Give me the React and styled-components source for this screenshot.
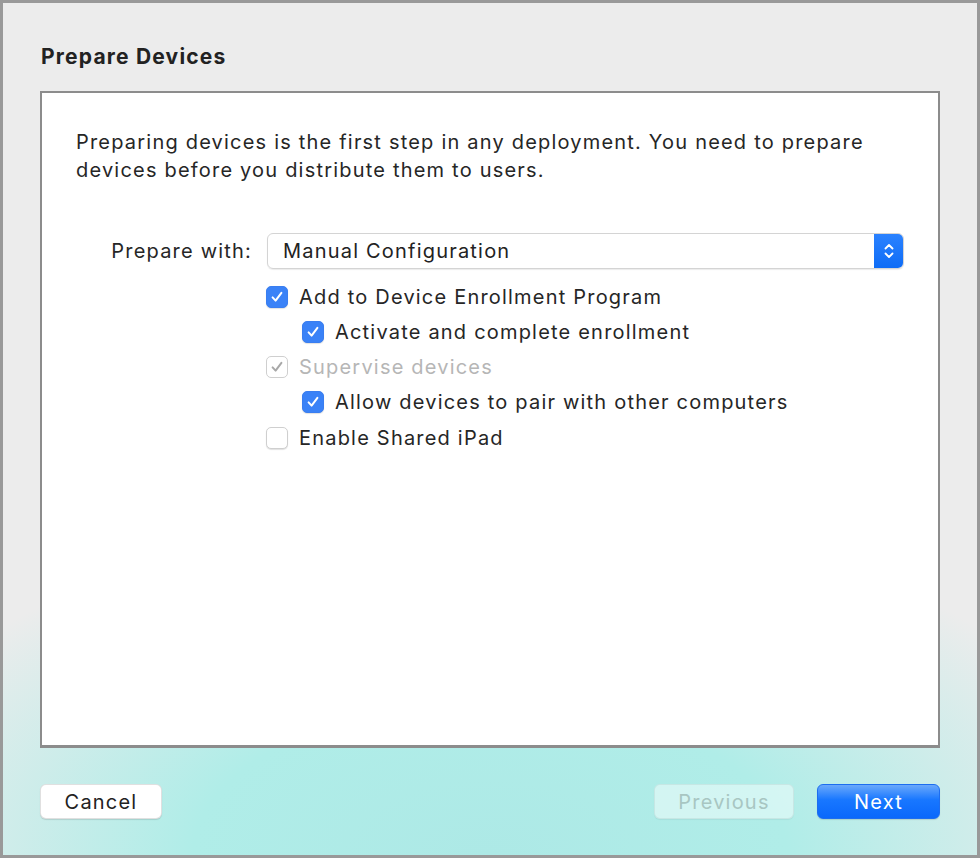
import React from 'react'
import styled, { createGlobalStyle } from 'styled-components'

const Global = createGlobalStyle`
  html, body { margin:0; padding:0; }
  body { font-family: Inter, "Noto Sans", "Liberation Sans", sans-serif; }
`

const Window = styled.div`
  width:980px;
  height:858px;
  box-sizing:border-box;
  border:3px solid #999;
  background:
    radial-gradient(ellipse 660px 340px at 50% 100%, #ade9e6 0%, #b0ede8 45%, rgba(176,237,232,0) 100%),
    #ececec;
  display:flex;
  flex-direction:column;
  padding:0 37px 36px 37px;
`
const Title = styled.h1`
  margin:0;
  height:88px;
  box-sizing:border-box;
  padding-top:41px;
  padding-left:1px;
  font-size:21px;
  font-weight:700;
  color:#222;
  letter-spacing:1.2px;
`
const Panel = styled.div`
  flex:1;
  background:#fff;
  border:2px solid #8c8c8c;
  border-bottom-width:3px;
  padding:35px 34px 0 34px;
`
const Intro = styled.p`
  margin:0;
  font-size:20px;
  line-height:28px;
  color:#262626;
  letter-spacing:1.2px;
`
const Form = styled.div`
  margin-top:49px;
  display:grid;
  grid-template-columns:176px 1fr;
  column-gap:15px;
  align-items:center;
  letter-spacing:1.2px;
`
const Label = styled.div`
  font-size:20px;
  color:#262626;
  text-align:right;
`
const Select = styled.div`
  height:36px;
  box-sizing:border-box;
  border:1px solid #d4d4d4;
  border-radius:6px;
  box-shadow:0 1px 1px rgba(0,0,0,0.08);
  display:flex;
  align-items:center;
  overflow:hidden;
  font-size:20px;
  color:#222;
`
const SelectText = styled.div`
  flex:1;
  padding-left:15px;
`
const Stepper = styled.div`
  width:29px;
  height:100%;
  background:linear-gradient(#2b82ff, #0e6cf6);
  display:flex;
  align-items:center;
  justify-content:center;
`
const Options = styled.div`
  grid-column:2;
  margin-top:17px;
  display:flex;
  flex-direction:column;
  gap:14.3px;
`
const Option = styled.label`
  display:flex;
  align-items:center;
  gap:11px;
  height:21px;
  padding-left:${p => (p.$indent ? 36 : 0)}px;
  margin-left:-1px;
  font-size:20px;
  color:${p => (p.$disabled ? '#b6b6b6' : '#262626')};
`
const Box = styled.span`
  width:22px;
  height:22px;
  box-sizing:border-box;
  border-radius:5px;
  display:flex;
  align-items:center;
  justify-content:center;
  background:${p => (p.$checked && !p.$disabled ? '#3a82f7' : '#fff')};
  border:1px solid ${p => (p.$checked && !p.$disabled ? '#3a7ef0' : '#cfcfcf')};
  box-shadow:${p => (p.$disabled ? 'none' : '0 1px 1px rgba(0,0,0,0.12)')};
`
const Footer = styled.div`
  display:flex;
  align-items:center;
  gap:23px;
  padding-top:36px;
`
const Button = styled.button`
  height:35px;
  width:${p => p.$w}px;
  box-sizing:border-box;
  border-radius:6px;
  font-family:inherit;
  font-size:20px;
  letter-spacing:1.2px;
  cursor:default;
  border:1px solid rgba(0,0,0,0.12);
  box-shadow:0 1px 1px rgba(0,0,0,0.12);
  background:#fff;
  color:#222;
  ${p => p.$primary && `
    background:linear-gradient(#6aa8fb, #1877ff 45%, #0a68fb);
    color:#fff;
    border-color:#1d6df0;
  `}
  ${p => p.$disabled && `
    background:rgba(235,252,250,0.6);
    color:#a8c6c2;
    border-color:rgba(0,0,0,0.06);
    box-shadow:0 1px 1px rgba(0,0,0,0.05);
  `}
`
const Spacer = styled.div`
  flex:1;
`

const Check = ({ color }) => (
  <svg width="14" height="14" viewBox="0 0 14 14">
    <path d="M2.6 7.4 L5.6 10.6 L11.4 2.8" fill="none" stroke={color} strokeWidth="2" strokeLinecap="round" strokeLinejoin="round" />
  </svg>
)

const CheckItem = ({ checked, disabled, indent, children }) => (
  <Option $indent={indent} $disabled={disabled}>
    <Box $checked={checked} $disabled={disabled}>
      {checked && <Check color={disabled ? '#a8a8a8' : '#fff'} />}
    </Box>
    {children}
  </Option>
)

export default function App() {
  return (
    <Window>
      <Global />
      <Title>Prepare Devices</Title>
      <Panel>
        <Intro>
          Preparing devices is the first step in any deployment. You need to prepare
          <br />
          devices before you distribute them to users.
        </Intro>
        <Form>
          <Label>Prepare with:</Label>
          <Select>
            <SelectText>Manual Configuration</SelectText>
            <Stepper>
              <svg width="14" height="24" viewBox="0 0 14 24">
                <path d="M3.5 9.5 L7 6 L10.5 9.5 M3.5 14.5 L7 18 L10.5 14.5" fill="none" stroke="#fff" strokeWidth="1.8" strokeLinecap="round" strokeLinejoin="round" />
              </svg>
            </Stepper>
          </Select>
          <Options>
            <CheckItem checked>Add to Device Enrollment Program</CheckItem>
            <CheckItem checked indent>Activate and complete enrollment</CheckItem>
            <CheckItem checked disabled>Supervise devices</CheckItem>
            <CheckItem checked indent>Allow devices to pair with other computers</CheckItem>
            <CheckItem>Enable Shared iPad</CheckItem>
          </Options>
        </Form>
      </Panel>
      <Footer>
        <Button $w={122}>Cancel</Button>
        <Spacer />
        <Button $w={140} $disabled>Previous</Button>
        <Button $w={123} $primary>Next</Button>
      </Footer>
    </Window>
  )
}
